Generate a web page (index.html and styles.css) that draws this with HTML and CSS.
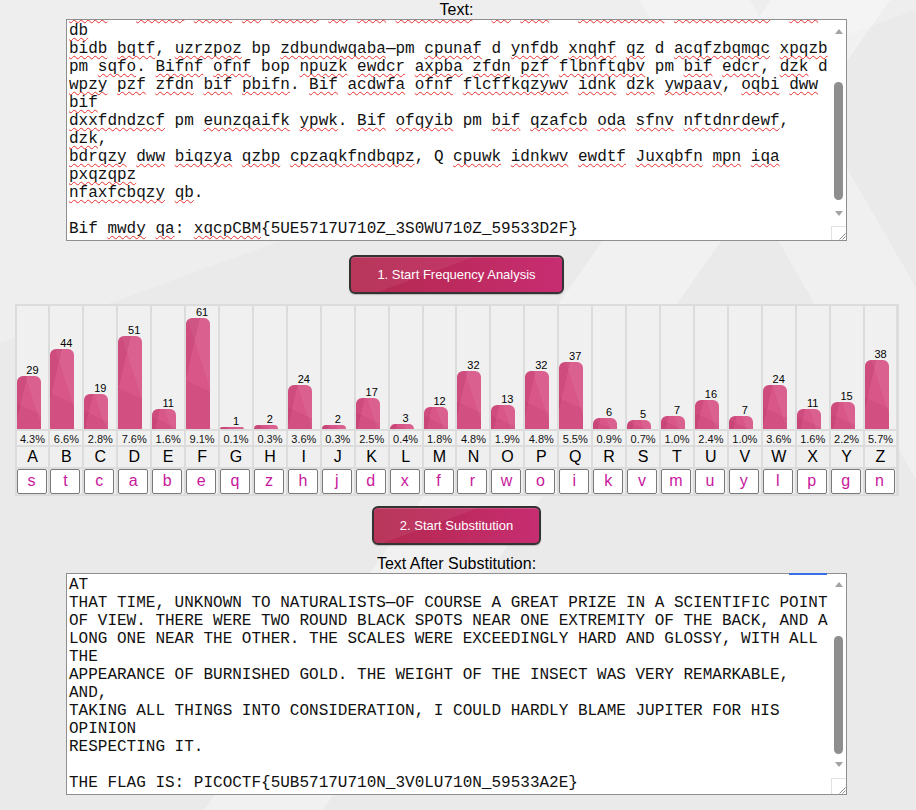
FILE: index.html
```
<!DOCTYPE html>
<html lang="en">
<head>
<meta charset="utf-8">
<title>Substitution Solver</title>
<link rel="stylesheet" href="styles.css">
</head>
<body>
<div class="page">
  <div class="label">Text:</div>
  <div class="ta">
    <div class="ta-text"><div class="ta-lines"><span class="sp">mnpt</span> d <span class="sp">ywdaa</span> <span class="sp">cdaf</span> <span class="sp">qz</span> <span class="sp">oiqci</span> <span class="sp">qb</span> <span class="sp">oda</span> <span class="sp">fzcwpafk</span>. <span class="sp">Qb</span> <span class="sp">oda</span> d <span class="sp">efdubqmuw</span> <span class="sp">acdndedfua</span>, <span class="sp">dzk</span>,
<span class="sp">db</span>
<span class="sp">bidb</span> <span class="sp">bqtf</span>, <span class="sp">uzrzpoz</span> bp <span class="sp">zdbundwqaba</span>—pm <span class="sp">cpunaf</span> d <span class="sp">ynfdb</span> <span class="sp">xnqhf</span> <span class="sp">qz</span> d <span class="sp">acqfzbqmqc</span> <span class="sp">xpqzb</span>
pm <span class="sp">sqfo</span>. <span class="sp">Bifnf</span> <span class="sp">ofnf</span> bop <span class="sp">npuzk</span> <span class="sp">ewdcr</span> <span class="sp">axpba</span> <span class="sp">zfdn</span> <span class="sp">pzf</span> <span class="sp">flbnftqbv</span> pm <span class="sp">bif</span> <span class="sp">edcr</span>, <span class="sp">dzk</span> d
<span class="sp">wpzy</span> <span class="sp">pzf</span> <span class="sp">zfdn</span> <span class="sp">bif</span> <span class="sp">pbifn</span>. <span class="sp">Bif</span> <span class="sp">acdwfa</span> <span class="sp">ofnf</span> <span class="sp">flcffkqzywv</span> <span class="sp">idnk</span> <span class="sp">dzk</span> <span class="sp">ywpaav</span>, <span class="sp">oqbi</span> <span class="sp">dww</span>
<span class="sp">bif</span>
<span class="sp">dxxfdndzcf</span> pm <span class="sp">eunzqaifk</span> <span class="sp">ypwk</span>. <span class="sp">Bif</span> <span class="sp">ofqyib</span> pm <span class="sp">bif</span> <span class="sp">qzafcb</span> <span class="sp">oda</span> <span class="sp">sfnv</span> <span class="sp">nftdnrdewf</span>,
<span class="sp">dzk</span>,
<span class="sp">bdrqzy</span> <span class="sp">dww</span> <span class="sp">biqzya</span> <span class="sp">qzbp</span> <span class="sp">cpzaqkfndbqpz</span>, Q <span class="sp">cpuwk</span> <span class="sp">idnkwv</span> <span class="sp">ewdtf</span> <span class="sp">Juxqbfn</span> <span class="sp">mpn</span> <span class="sp">iqa</span>
<span class="sp">pxqzqpz</span>
<span class="sp">nfaxfcbqzy</span> <span class="sp">qb</span>.

Bif <span class="sp">mwdy</span> <span class="sp">qa</span>: <span class="sp">xqcpCBM</span>{5UE5717U710Z_3S0WU710Z_59533D2F}</div></div>
    <div class="sb">
      <div class="sb-up"></div>
      <div class="sb-thumb"></div>
      <div class="sb-down"></div>
      <div class="sb-corner"><svg width="13" height="13" viewBox="0 0 13 13"><path d="M12.5 6.5 L6.5 12.5 M12.5 9.5 L9.5 12.5" stroke="#8a8a8a" stroke-width="1" fill="none"/></svg></div>
    </div>
  </div>

  <button class="btn btn-freq" type="button">1. Start Frequency Analysis</button>

  <div class="chart">
    <div class="col"><div class="bar-cell"><span class="val">29</span><div class="bar" style="height:53px"></div></div><div class="pct">4.3%</div><div class="let">A</div><div class="sub"><span class="key">s</span></div></div>
    <div class="col"><div class="bar-cell"><span class="val">44</span><div class="bar" style="height:80px"></div></div><div class="pct">6.6%</div><div class="let">B</div><div class="sub"><span class="key">t</span></div></div>
    <div class="col"><div class="bar-cell"><span class="val">19</span><div class="bar" style="height:35px"></div></div><div class="pct">2.8%</div><div class="let">C</div><div class="sub"><span class="key">c</span></div></div>
    <div class="col"><div class="bar-cell"><span class="val">51</span><div class="bar" style="height:93px"></div></div><div class="pct">7.6%</div><div class="let">D</div><div class="sub"><span class="key">a</span></div></div>
    <div class="col"><div class="bar-cell"><span class="val">11</span><div class="bar" style="height:20px"></div></div><div class="pct">1.6%</div><div class="let">E</div><div class="sub"><span class="key">b</span></div></div>
    <div class="col"><div class="bar-cell"><span class="val">61</span><div class="bar" style="height:111px"></div></div><div class="pct">9.1%</div><div class="let">F</div><div class="sub"><span class="key">e</span></div></div>
    <div class="col"><div class="bar-cell"><span class="val">1</span><div class="bar" style="height:2px"></div></div><div class="pct">0.1%</div><div class="let">G</div><div class="sub"><span class="key">q</span></div></div>
    <div class="col"><div class="bar-cell"><span class="val">2</span><div class="bar" style="height:4px"></div></div><div class="pct">0.3%</div><div class="let">H</div><div class="sub"><span class="key">z</span></div></div>
    <div class="col"><div class="bar-cell"><span class="val">24</span><div class="bar" style="height:44px"></div></div><div class="pct">3.6%</div><div class="let">I</div><div class="sub"><span class="key">h</span></div></div>
    <div class="col"><div class="bar-cell"><span class="val">2</span><div class="bar" style="height:4px"></div></div><div class="pct">0.3%</div><div class="let">J</div><div class="sub"><span class="key">j</span></div></div>
    <div class="col"><div class="bar-cell"><span class="val">17</span><div class="bar" style="height:31px"></div></div><div class="pct">2.5%</div><div class="let">K</div><div class="sub"><span class="key">d</span></div></div>
    <div class="col"><div class="bar-cell"><span class="val">3</span><div class="bar" style="height:5px"></div></div><div class="pct">0.4%</div><div class="let">L</div><div class="sub"><span class="key">x</span></div></div>
    <div class="col"><div class="bar-cell"><span class="val">12</span><div class="bar" style="height:22px"></div></div><div class="pct">1.8%</div><div class="let">M</div><div class="sub"><span class="key">f</span></div></div>
    <div class="col"><div class="bar-cell"><span class="val">32</span><div class="bar" style="height:58px"></div></div><div class="pct">4.8%</div><div class="let">N</div><div class="sub"><span class="key">r</span></div></div>
    <div class="col"><div class="bar-cell"><span class="val">13</span><div class="bar" style="height:24px"></div></div><div class="pct">1.9%</div><div class="let">O</div><div class="sub"><span class="key">w</span></div></div>
    <div class="col"><div class="bar-cell"><span class="val">32</span><div class="bar" style="height:58px"></div></div><div class="pct">4.8%</div><div class="let">P</div><div class="sub"><span class="key">o</span></div></div>
    <div class="col"><div class="bar-cell"><span class="val">37</span><div class="bar" style="height:67px"></div></div><div class="pct">5.5%</div><div class="let">Q</div><div class="sub"><span class="key">i</span></div></div>
    <div class="col"><div class="bar-cell"><span class="val">6</span><div class="bar" style="height:11px"></div></div><div class="pct">0.9%</div><div class="let">R</div><div class="sub"><span class="key">k</span></div></div>
    <div class="col"><div class="bar-cell"><span class="val">5</span><div class="bar" style="height:9px"></div></div><div class="pct">0.7%</div><div class="let">S</div><div class="sub"><span class="key">v</span></div></div>
    <div class="col"><div class="bar-cell"><span class="val">7</span><div class="bar" style="height:13px"></div></div><div class="pct">1.0%</div><div class="let">T</div><div class="sub"><span class="key">m</span></div></div>
    <div class="col"><div class="bar-cell"><span class="val">16</span><div class="bar" style="height:29px"></div></div><div class="pct">2.4%</div><div class="let">U</div><div class="sub"><span class="key">u</span></div></div>
    <div class="col"><div class="bar-cell"><span class="val">7</span><div class="bar" style="height:13px"></div></div><div class="pct">1.0%</div><div class="let">V</div><div class="sub"><span class="key">y</span></div></div>
    <div class="col"><div class="bar-cell"><span class="val">24</span><div class="bar" style="height:44px"></div></div><div class="pct">3.6%</div><div class="let">W</div><div class="sub"><span class="key">l</span></div></div>
    <div class="col"><div class="bar-cell"><span class="val">11</span><div class="bar" style="height:20px"></div></div><div class="pct">1.6%</div><div class="let">X</div><div class="sub"><span class="key">p</span></div></div>
    <div class="col"><div class="bar-cell"><span class="val">15</span><div class="bar" style="height:27px"></div></div><div class="pct">2.2%</div><div class="let">Y</div><div class="sub"><span class="key">g</span></div></div>
    <div class="col"><div class="bar-cell"><span class="val">38</span><div class="bar" style="height:69px"></div></div><div class="pct">5.7%</div><div class="let">Z</div><div class="sub"><span class="key">n</span></div></div>
  </div>

  <button class="btn btn-sub" type="button">2. Start Substitution</button>

  <div class="label label-after">Text After Substitution:</div>
  <div class="ta ta-plain">
    <div class="focus-mark"></div>
    <div class="ta-text"><div class="ta-lines">FROM A GLASS CASE IN WHICH IT WAS ENCLOSED. IT WAS A BEAUTIFUL SCARABAEUS, AND,
AT
THAT TIME, UNKNOWN TO NATURALISTS—OF COURSE A GREAT PRIZE IN A SCIENTIFIC POINT
OF VIEW. THERE WERE TWO ROUND BLACK SPOTS NEAR ONE EXTREMITY OF THE BACK, AND A
LONG ONE NEAR THE OTHER. THE SCALES WERE EXCEEDINGLY HARD AND GLOSSY, WITH ALL
THE
APPEARANCE OF BURNISHED GOLD. THE WEIGHT OF THE INSECT WAS VERY REMARKABLE,
AND,
TAKING ALL THINGS INTO CONSIDERATION, I COULD HARDLY BLAME JUPITER FOR HIS
OPINION
RESPECTING IT.

THE FLAG IS: PICOCTF{5UB5717U710N_3V0LU710N_59533A2E}</div></div>
    <div class="sb">
      <div class="sb-up"></div>
      <div class="sb-thumb"></div>
      <div class="sb-down"></div>
      <div class="sb-corner"><svg width="13" height="13" viewBox="0 0 13 13"><path d="M12.5 6.5 L6.5 12.5 M12.5 9.5 L9.5 12.5" stroke="#8a8a8a" stroke-width="1" fill="none"/></svg></div>
    </div>
  </div>
</div>
</body>
</html>
```
FILE: styles.css
```
html, body {
  margin: 0;
  padding: 0;
  width: 916px;
  height: 810px;
  overflow: hidden;
}

body {
  font-family: "Liberation Sans", Arial, sans-serif;
  color: #000;
  background:
    linear-gradient(125deg, transparent 0 52%, rgba(255,255,255,0.35) 52% 60%, transparent 60%),
    linear-gradient(60deg, transparent 0 80%, rgba(255,255,255,0.3) 80% 88%, transparent 88%),
    linear-gradient(160deg, rgba(255,255,255,0.2) 0 30%, transparent 30%),
    #eaeaea;
}

.page {
  width: 913px;
  display: flex;
  flex-direction: column;
  align-items: center;
}

.label {
  font-size: 16px;
  line-height: 19px;
  height: 19px;
}

.label-after {
  margin-top: 10px;
  line-height: 18px;
  height: 18px;
}

/* fake textarea */
.ta {
  position: relative;
  width: 781px;
  height: 222px;
  box-sizing: border-box;
  border: 1px solid #8f8f8f;
  background: #fff;
  display: flex;
}

.ta-text {
  flex: 1;
  min-width: 0;
  overflow: hidden;
  display: flex;
  flex-direction: column;
  justify-content: flex-end;
  padding: 0 2px 2px 2px;
}

.ta-lines {
  font-family: "Liberation Mono", "Courier New", monospace;
  font-size: 16px;
  line-height: 18px;
  white-space: pre;
  color: #111;
}

.sp {
  text-decoration-line: underline;
  text-decoration-style: wavy;
  text-decoration-color: #e8302f;
  text-decoration-thickness: 1.4px;
  text-decoration-skip-ink: none;
  text-underline-offset: 1.5px;
}

.sb {
  width: 15px;
  flex: none;
  display: flex;
  flex-direction: column;
  align-items: center;
  background: #fff;
}

.sb-up,
.sb-down {
  width: 0;
  height: 0;
  border-left: 4.5px solid transparent;
  border-right: 4.5px solid transparent;
}

.sb-up {
  margin-top: 9px;
  border-bottom: 5px solid #a3a3a3;
}

.sb-thumb {
  margin-top: 48px;
  width: 9px;
  height: 118px;
  border-radius: 5px;
  background: #8e8e8e;
}

.sb-down {
  margin-top: 11px;
  border-top: 5px solid #a3a3a3;
}

.sb-corner {
  margin-top: auto;
  align-self: stretch;
  height: 14px;
  box-sizing: border-box;
  border-top: 1px solid #e2e2e2;
  border-left: 1px solid #e2e2e2;
  display: flex;
  justify-content: flex-end;
  align-items: flex-end;
}

.sb-corner svg {
  display: block;
}

.ta-plain .sb-up { margin-top: 8px; }
.ta-plain .sb-thumb { margin-top: 49px; }
.ta-plain .sb-down { margin-top: 8px; }
.ta-plain .sb-corner { height: 16px; }

.focus-mark {
  position: absolute;
  left: 722px;
  top: -1px;
  width: 38px;
  height: 2px;
  background: #3a6fe6;
}

/* buttons */
.btn {
  box-sizing: border-box;
  height: 39px;
  padding: 0 10px;
  border: 2px solid #333;
  border-radius: 6px;
  background:
    linear-gradient(160deg, rgba(255,255,255,0.06) 0 40%, transparent 40%),
    linear-gradient(90deg, #b42a50 0%, #bd2a5e 50%, #c72d72 100%);
  box-shadow: inset 0 1px 0 rgba(255,255,255,0.18), 0 1px 1px rgba(0,0,0,0.2);
  color: #fff;
  font-family: "Liberation Sans", Arial, sans-serif;
  font-size: 13px;
  white-space: nowrap;
  cursor: pointer;
}

.btn-freq {
  margin-top: 14px;
  width: 215px;
}

.btn-sub {
  margin-top: 10px;
  width: 169px;
}

/* chart */
.chart {
  margin-top: 10px;
  width: 884px;
  box-sizing: border-box;
  padding: 2px;
  display: flex;
  gap: 2px;
  background: #dcdcdc;
}

.col {
  flex: 1;
  min-width: 0;
  display: flex;
  flex-direction: column;
  gap: 2px;
}

.bar-cell {
  height: 123px;
  background: rgba(240,240,240,0.95);
  display: flex;
  flex-direction: column;
  justify-content: flex-end;
}

.val {
  display: block;
  text-align: center;
  font-size: 11px;
  line-height: 12px;
  color: #000;
}

.bar {
  width: 24px;
  border-radius: 6px 6px 0 0;
  background:
    linear-gradient(103deg, rgba(150,20,70,0.16) 0 28%, transparent 28.5%),
    linear-gradient(205deg, transparent 0 60%, rgba(150,20,70,0.10) 60.5%),
    linear-gradient(72deg, transparent 0 62%, rgba(255,255,255,0.06) 62.5%),
    #d85788;
}

.pct {
  height: 14px;
  line-height: 16px;
  font-size: 11px;
  text-align: center;
  background: #f1f1f1;
  color: #111;
  overflow: hidden;
}

.let {
  height: 20px;
  line-height: 19px;
  font-size: 16px;
  text-align: center;
  background: #efefef;
}

.sub {
  height: 25px;
  background: #efefef;
}

.key {
  display: block;
  box-sizing: border-box;
  width: 30px;
  height: 25px;
  border: 1px solid #7a7a7a;
  border-radius: 2px;
  background: #fff;
  color: #c8189c;
  font-size: 16px;
  line-height: 22px;
  text-align: center;
}
```
